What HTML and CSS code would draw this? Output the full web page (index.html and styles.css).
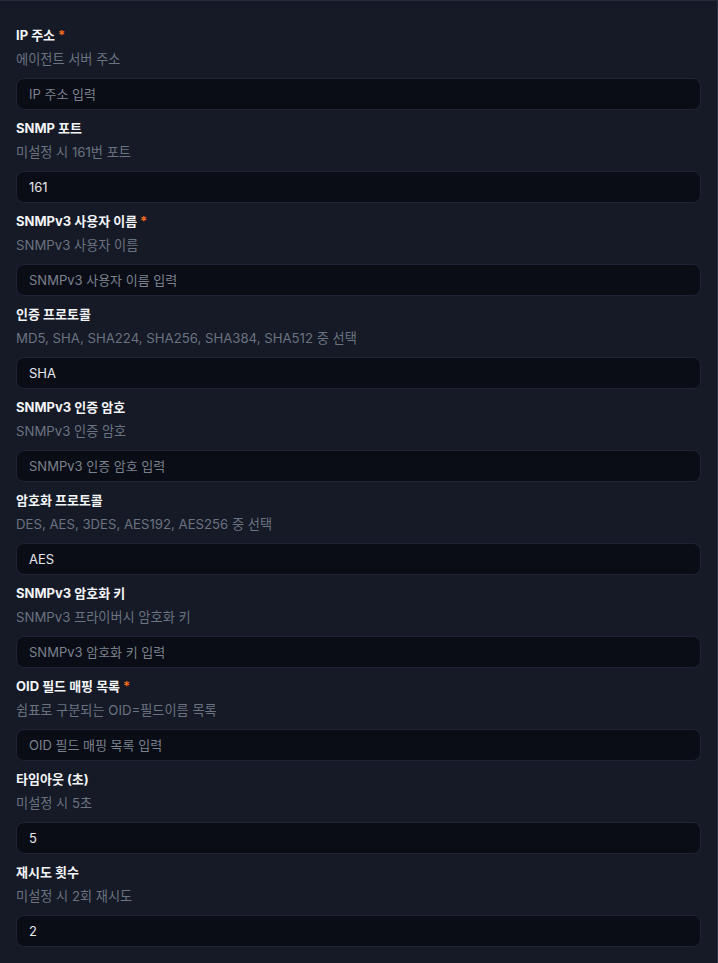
FILE: index.html
```html
<!DOCTYPE html>
<html lang="ko">
<head>
	<meta charset="utf-8">
	<meta name="viewport" content="width=device-width, initial-scale=1">
	<title>SNMP 에이전트 설정</title>
	<link rel="stylesheet" href="styles.css">
</head>
<body>
<div class="panel">
	<form class="fields">
		<div class="field">
			<label class="label" for="ip">IP 주소<span class="req">*</span></label>
			<p class="desc">에이전트 서버 주소</p>
			<input class="input" id="ip" type="text" placeholder="IP 주소 입력">
		</div>
		<div class="field">
			<label class="label" for="port">SNMP 포트</label>
			<p class="desc">미설정 시 161번 포트</p>
			<input class="input" id="port" type="text" value="161">
		</div>
		<div class="field">
			<label class="label" for="user">SNMPv3 사용자 이름<span class="req">*</span></label>
			<p class="desc">SNMPv3 사용자 이름</p>
			<input class="input" id="user" type="text" placeholder="SNMPv3 사용자 이름 입력">
		</div>
		<div class="field">
			<label class="label" for="auth">인증 프로토콜</label>
			<p class="desc">MD5, SHA, SHA224, SHA256, SHA384, SHA512 중 선택</p>
			<input class="input" id="auth" type="text" value="SHA">
		</div>
		<div class="field">
			<label class="label" for="authpw">SNMPv3 인증 암호</label>
			<p class="desc">SNMPv3 인증 암호</p>
			<input class="input" id="authpw" type="text" placeholder="SNMPv3 인증 암호 입력">
		</div>
		<div class="field">
			<label class="label" for="priv">암호화 프로토콜</label>
			<p class="desc">DES, AES, 3DES, AES192, AES256 중 선택</p>
			<input class="input" id="priv" type="text" value="AES">
		</div>
		<div class="field">
			<label class="label" for="privkey">SNMPv3 암호화 키</label>
			<p class="desc">SNMPv3 프라이버시 암호화 키</p>
			<input class="input" id="privkey" type="text" placeholder="SNMPv3 암호화 키 입력">
		</div>
		<div class="field">
			<label class="label" for="oid">OID 필드 매핑 목록<span class="req">*</span></label>
			<p class="desc">쉼표로 구분되는 OID=필드이름 목록</p>
			<input class="input" id="oid" type="text" placeholder="OID 필드 매핑 목록 입력">
		</div>
		<div class="field">
			<label class="label" for="timeout">타임아웃 (초)</label>
			<p class="desc">미설정 시 5초</p>
			<input class="input" id="timeout" type="text" value="5">
		</div>
		<div class="field">
			<label class="label" for="retry">재시도 횟수</label>
			<p class="desc">미설정 시 2회 재시도</p>
			<input class="input" id="retry" type="text" value="2">
		</div>
	</form>
</div>
</body>
</html>
```
FILE: styles.css
```css
*{
	padding: 0px;
	margin: 0px;
	box-sizing: border-box;
}
body{
	background-color: #151a26;
	font-family: "Inter", "Noto Sans CJK KR", sans-serif;
	font-size: 13px;
}
.panel{
	min-height: 963px;
	background-color: #151a26;
	border-top: 1px solid #232a3b;
	border-right: 1px solid #2a3244;
	padding: 24px 16px 16px 16px;
}
.field{
	display: flex;
	flex-direction: column;
	padding-bottom: 8px;
}
.label{
	line-height: 20px;
	font-weight: 700;
	color: #f3f4f6;
}
.req{
	color: #f26b1d;
	margin-left: 3px;
}
.desc{
	line-height: 20px;
	margin-top: 4px;
	color: #6b7280;
	font-size: 13.2px;
}
.input{
	margin-top: 9px;
	height: 32px;
	width: 100%;
	background-color: #0a0d16;
	border: 1px solid #1e2435;
	border-radius: 8px;
	padding: 0 12px;
	font-family: inherit;
	font-size: 13px;
	color: #e5e7eb;
	outline: none;
}
.input::placeholder{
	color: #7b818d;
}
```
